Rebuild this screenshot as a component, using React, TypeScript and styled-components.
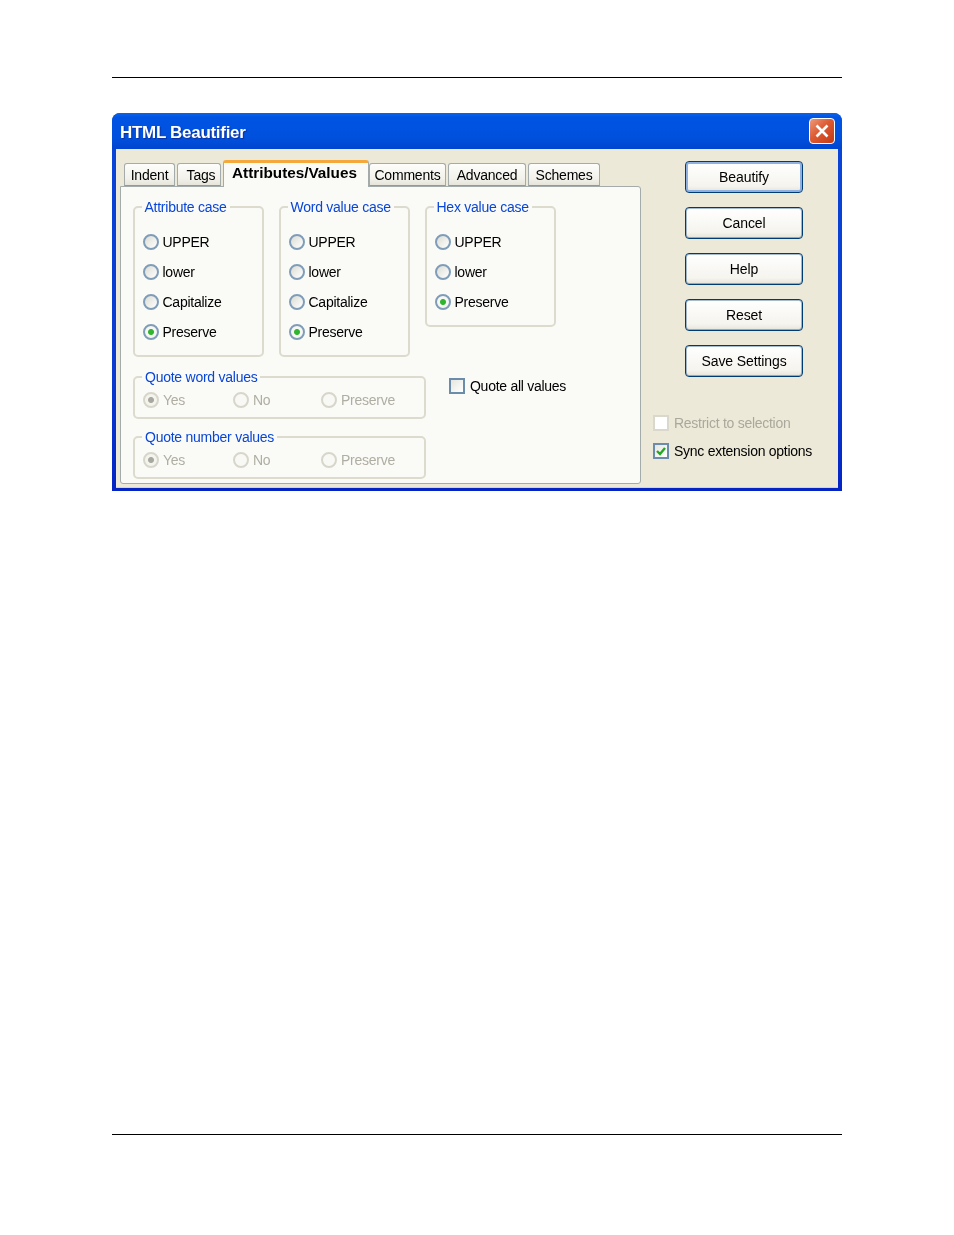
import React from 'react'
import styled, { createGlobalStyle } from 'styled-components'

const GlobalStyle = createGlobalStyle`
	html, body {
		margin: 0;
		padding: 0;
		background: #fff;
	}
	body {
		font-family: 'Liberation Sans', Arial, sans-serif;
	}
`

const Page = styled.div`
	width: 730px;
	height: 1235px;
	margin-left: 112px;
	padding-top: 77px;
	box-sizing: border-box;
`

const Rule = styled.div`
	height: 1px;
	background: #000;
`

const Window = styled.div`
	height: 378px;
	margin: 35px 0 643px;
	display: flex;
	flex-direction: column;
	box-sizing: border-box;
	background: linear-gradient(#0a45d8, #0a3ad0 70%, #0424c4);
	border-radius: 8px 8px 0 0;
	overflow: hidden;
	filter: blur(0.4px);
`

const TitleBar = styled.div`
	height: 36px;
	flex: none;
	display: flex;
	align-items: center;
	justify-content: space-between;
	padding: 0 7px 0 8px;
	background: linear-gradient(#0d62ea 0%, #0054e3 12%, #0050dc 70%, #0044d0 100%);
`

const Title = styled.div`
	color: #fff;
	font-size: 17px;
	letter-spacing: -0.3px;
	font-weight: bold;
	padding-top: 3px;
	text-shadow: 1px 1px 1px #0b2f9e;
`

const CloseButton = styled.div`
	width: 26px;
	height: 26px;
	box-sizing: border-box;
	border: 1px solid #fff;
	border-radius: 4px;
	background: linear-gradient(135deg, #ee9a7c 0%, #dc5a32 45%, #c43a14 100%);
	display: flex;
	align-items: center;
	justify-content: center;
`

const Client = styled.div`
	flex: 1;
	display: flex;
	margin: 0 4px 4px;
	padding: 11px 0 3px 4px;
	background: #ece9d8;
	border-bottom: 1px solid #d8d4c0;
`

const TabArea = styled.div`
	width: 521px;
	flex: none;
	display: flex;
	flex-direction: column;
`

const TabRow = styled.div`
	height: 26px;
	display: flex;
	align-items: flex-end;
	padding-left: 4px;
	position: relative;
	z-index: 1;
`

const Tab = styled.div<{ $active?: boolean; $width: number; $inset?: number }>`
	width: ${(p) => p.$width}px;
	height: ${(p) => (p.$active ? 27 : 23)}px;
	margin-right: ${(p) => (p.$active ? 0 : 2)}px;
	margin-bottom: ${(p) => (p.$active ? -1 : 0)}px;
	padding: ${(p) => (p.$active ? '0 3px 4px 0' : `0 0 0 ${p.$inset ?? 0}px`)};
	box-sizing: border-box;
	display: flex;
	align-items: center;
	justify-content: center;
	font-size: ${(p) => (p.$active ? 15.3 : 14)}px;
	letter-spacing: ${(p) => (p.$active ? 0 : -0.2)}px;
	font-weight: ${(p) => (p.$active ? 'bold' : 'normal')};
	color: #000;
	border: 1px solid #a3abab;
	border-bottom: ${(p) => (p.$active ? 'none' : '1px solid #919b9c')};
	border-top: ${(p) => (p.$active ? '3px solid #f5a93c' : '1px solid #a3abab')};
	border-radius: 3px 3px 0 0;
	background: ${(p) =>
		p.$active ? '#fafaf7' : 'linear-gradient(#fdfdfb, #f2f1ea 70%, #e6e4da)'};
`

const Panel = styled.div`
	height: 298px;
	box-sizing: border-box;
	border: 1px solid #a3abab;
	border-radius: 0 3px 3px 3px;
	padding: 12px 0 0 12px;
	background: #fafaf7;
`

const CaseRow = styled.div`
	display: flex;
	align-items: flex-start;
	gap: 15px;
	margin-bottom: 12px;
`

const QuoteRow = styled.div`
	display: flex;
	align-items: flex-start;
	gap: 23px;
`

const QuoteGroups = styled.div`
	width: 293px;
	display: flex;
	flex-direction: column;
	gap: 10px;
`

const Group = styled.fieldset`
	margin: 0;
	min-width: 0;
	box-sizing: border-box;
	border: 2px solid #dcdbcd;
	border-radius: 5px;
`

const CaseGroup = styled(Group)`
	width: 131px;
	padding: 12px 0 8px 7.5px;
`

const QuoteGroup = styled(Group)`
	padding: 0 0 2px 8px;
	display: grid;
	grid-template-columns: 90px 88px 1fr;
`

const GroupTitle = styled.legend`
	margin-left: -1px;
	padding: 0 3px;
	height: 16px;
	line-height: 17px;
	font-size: 14px;
	letter-spacing: -0.25px;
	color: #0a46d6;
`

const Option = styled.div<{ $disabled?: boolean }>`
	height: 30px;
	display: flex;
	align-items: center;
	gap: 4px;
	font-size: 14px;
	letter-spacing: -0.25px;
	color: ${(p) => (p.$disabled ? '#b0aea2' : '#000')};
`

const RadioMark = styled.span<{ $checked?: boolean; $disabled?: boolean }>`
	width: 16px;
	height: 16px;
	flex: none;
	box-sizing: border-box;
	border-radius: 50%;
	border: 2px solid ${(p) => (p.$disabled ? '#d8d6ca' : '#7f9db9')};
	background: ${(p) =>
		p.$checked
			? p.$disabled
				? 'radial-gradient(circle, #a8a89e 0 2.5px, #f4f4ef 3.5px)'
				: 'radial-gradient(circle, #2fb52f 0 2.5px, #f6f6f2 3.5px)'
			: p.$disabled
				? '#f8f8f4'
				: 'linear-gradient(135deg, #dcdcd4, #fff)'};
`

const CheckRow = styled.div<{ $disabled?: boolean }>`
	height: 16px;
	display: flex;
	align-items: center;
	gap: 5px;
	font-size: 14px;
	letter-spacing: -0.27px;
	color: ${(p) => (p.$disabled ? '#aaa89c' : '#000')};
`

const QuoteAll = styled(CheckRow)`
	margin-top: 9px;
`

const CheckMark = styled.span<{ $disabled?: boolean }>`
	width: 16px;
	height: 16px;
	flex: none;
	box-sizing: border-box;
	display: flex;
	align-items: center;
	justify-content: center;
	border: 2px solid ${(p) => (p.$disabled ? '#dad8cc' : '#6b8cab')};
	background: ${(p) => (p.$disabled ? '#fff' : 'linear-gradient(135deg, #e6e6de, #fff)')};
`

const Side = styled.div`
	flex: 1;
	padding: 1px 0 0 12px;
	display: flex;
	flex-direction: column;
`

const ButtonStack = styled.div`
	display: flex;
	flex-direction: column;
	gap: 14px;
	padding-left: 32px;
	margin-bottom: 38px;
`

const Button = styled.div<{ $default?: boolean }>`
	width: 118px;
	height: 32px;
	box-sizing: border-box;
	display: flex;
	align-items: center;
	justify-content: center;
	font-size: 14px;
	letter-spacing: -0.1px;
	color: #000;
	border: 1px solid #003c74;
	border-radius: 4px;
	background: linear-gradient(#fff, #f5f4ee 80%, #e6e4d8);
	box-shadow: ${(p) =>
		p.$default ? 'inset 0 0 0 2px #8fb0e0' : 'inset 0 0 0 1px rgba(0, 60, 116, 0.35)'};
`

const SideChecks = styled.div`
	display: flex;
	flex-direction: column;
	gap: 12px;
`

const caseGroups = [
	{ title: 'Attribute case', options: ['UPPER', 'lower', 'Capitalize', 'Preserve'] },
	{ title: 'Word value case', options: ['UPPER', 'lower', 'Capitalize', 'Preserve'] },
	{ title: 'Hex value case', options: ['UPPER', 'lower', 'Preserve'] },
]

const tabs = [
	{ label: 'Indent', width: 51 },
	{ label: 'Tags', width: 44, inset: 4 },
	{ label: 'Attributes/Values', width: 146, active: true },
	{ label: 'Comments', width: 77 },
	{ label: 'Advanced', width: 78 },
	{ label: 'Schemes', width: 72 },
]

const Tick = () => (
	<svg width='12' height='12' viewBox='0 0 12 12'>
		<path d='M2 6 L5 9 L10 3' fill='none' stroke='#22a822' strokeWidth='2.4' />
	</svg>
)

const App = () => (
	<>
		<GlobalStyle />
		<Page>
			<Rule />
			<Window>
				<TitleBar>
					<Title>HTML Beautifier</Title>
					<CloseButton>
						<svg width='18' height='18' viewBox='0 0 18 18'>
							<path d='M3.5 3.5 L14.5 14.5 M14.5 3.5 L3.5 14.5' stroke='#fff' strokeWidth='2.6' />
						</svg>
					</CloseButton>
				</TitleBar>
				<Client>
					<TabArea>
						<TabRow>
							{tabs.map((t) => (
								<Tab key={t.label} $active={t.active} $width={t.width} $inset={t.inset}>
									{t.label}
								</Tab>
							))}
						</TabRow>
						<Panel>
							<CaseRow>
								{caseGroups.map((g) => (
									<CaseGroup key={g.title}>
										<GroupTitle>{g.title}</GroupTitle>
										{g.options.map((o) => (
											<Option key={o}>
												<RadioMark $checked={o === 'Preserve'} />
												{o}
											</Option>
										))}
									</CaseGroup>
								))}
							</CaseRow>
							<QuoteRow>
								<QuoteGroups>
									{['Quote word values', 'Quote number values'].map((title) => (
										<QuoteGroup key={title}>
											<GroupTitle>{title}</GroupTitle>
											{['Yes', 'No', 'Preserve'].map((o) => (
												<Option key={o} $disabled>
													<RadioMark $disabled $checked={o === 'Yes'} />
													{o}
												</Option>
											))}
										</QuoteGroup>
									))}
								</QuoteGroups>
								<QuoteAll>
									<CheckMark />
									Quote all values
								</QuoteAll>
							</QuoteRow>
						</Panel>
					</TabArea>
					<Side>
						<ButtonStack>
							<Button $default>Beautify</Button>
							<Button>Cancel</Button>
							<Button>Help</Button>
							<Button>Reset</Button>
							<Button>Save Settings</Button>
						</ButtonStack>
						<SideChecks>
							<CheckRow $disabled>
								<CheckMark $disabled />
								Restrict to selection
							</CheckRow>
							<CheckRow>
								<CheckMark>
									<Tick />
								</CheckMark>
								Sync extension options
							</CheckRow>
						</SideChecks>
					</Side>
				</Client>
			</Window>
			<Rule />
		</Page>
	</>
)

export default App
